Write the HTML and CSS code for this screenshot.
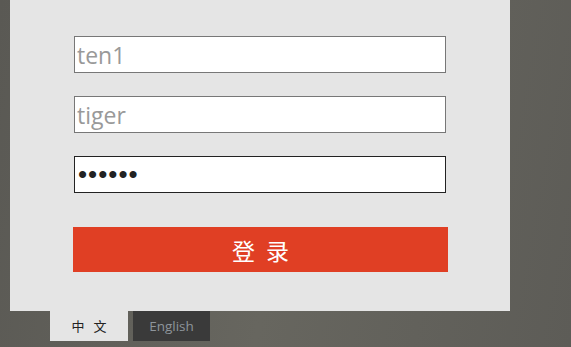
FILE: index.html
```html
<!DOCTYPE html>
<html lang="zh">
<head>
    <meta charset="UTF-8">
    <meta name="viewport" content="width=device-width, initial-scale=1.0">
    <title>登录</title>
    <link rel="stylesheet" href="styles.css">
</head>
<body>
    <div class="page">
        <!-- Login panel -->
        <div class="panel">
            <form class="login-form" onsubmit="return false;">
                <input class="field" type="text" placeholder="ten1">
                <input class="field" type="text" placeholder="tiger">
                <input class="field field-active" type="password" value="123456">
                <button class="login-btn">登 录</button>
            </form>
        </div>
        <!-- Language tabs -->
        <div class="lang-tabs">
            <a href="#" class="tab tab-zh">中 文</a>
            <a href="#" class="tab tab-en">English</a>
        </div>
    </div>
</body>
</html>
```

FILE: styles.css
```css
html, body {
    height: 100%;
}
body {
    margin: 0;
    padding: 0;
    background: linear-gradient(100deg, #5a5954 0%, #67665f 50%, #5d5c57 100%);
    font-family: "Open Sans", "Noto Sans CJK SC", sans-serif;
}
.page {
    padding-left: 10px;
}
.panel {
    width: 500px;
    height: 311px;
    background: #e5e5e5;
    box-sizing: border-box;
    padding: 36px 0 0 64px;
}
.login-form {
    display: flex;
    flex-direction: column;
    align-items: flex-start;
}
.field {
    width: 372px;
    height: 37px;
    box-sizing: border-box;
    margin: 0 0 23px 0;
    padding: 0 2px;
    border: 1px solid #777;
    background: #fff;
    font-family: "Open Sans", sans-serif;
    font-size: 23px;
    color: #222;
    outline: none;
}
.field::placeholder {
    color: #999;
}
.field-active {
    border-color: #222;
    font-family: "Liberation Sans", sans-serif;
    font-size: 26px;
    letter-spacing: 1px;
    padding-left: 3px;
}
.login-btn {
    margin: 11px 0 0 -1px;
    width: 375px;
    height: 45px;
    border: none;
    background: #e03f24;
    color: #fff;
    font-family: "Noto Sans CJK SC", sans-serif;
    font-size: 23px;
    letter-spacing: 3px;
    text-indent: 3px;
    cursor: pointer;
}
.lang-tabs {
    display: flex;
    gap: 5px;
    margin-left: 40px;
}
.tab {
    height: 30px;
    line-height: 30px;
    text-align: center;
    text-decoration: none;
}
.tab-zh {
    width: 78px;
    background: #e5e5e5;
    color: #222;
    font-family: "Noto Sans CJK SC", sans-serif;
    font-size: 13px;
    letter-spacing: 3px;
    text-indent: 3px;
}
.tab-en {
    width: 77px;
    background: #3a3a3a;
    color: #8e959b;
    font-family: "Open Sans", sans-serif;
    font-size: 13.5px;
}
```
